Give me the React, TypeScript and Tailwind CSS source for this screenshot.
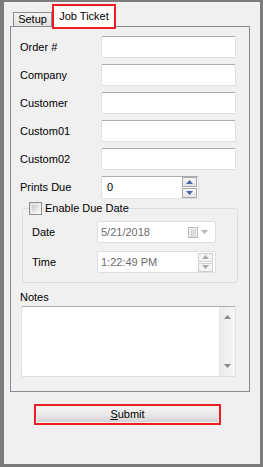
import React from 'react'

// ─── Small pieces ────────────────────────────────────────────────
function Arrow({ dir, color }: { dir: 'up' | 'down'; color: string }) {
  return (
    <svg width="7" height="4" viewBox="0 0 7 4">
      {dir === 'up' ? <path d="M3.5 0 L7 4 L0 4 Z" fill={color} /> : <path d="M0 0 L7 0 L3.5 4 Z" fill={color} />}
    </svg>
  )
}

function TextBox() {
  return <div className="h-[22px] w-[135px] rounded-[2px] border border-[#dcdfe6] border-t-[#abadb3] bg-white" />
}

function Row({ label, children }: { label: string; children: React.ReactNode }) {
  return (
    <div className="flex items-center pl-[9px]">
      <span className="w-[81px]">{label}</span>
      {children}
    </div>
  )
}

function SpinButtons({ color, enabled }: { color: string; enabled: boolean }) {
  const btn = enabled
    ? 'h-[10px] w-[15px] flex items-center justify-center border border-[#a9a9a9] bg-gradient-to-b from-[#f7f7f7] to-[#e4e4e4]'
    : 'h-[9px] w-[15px] flex items-center justify-center border border-[#cfcfcf] bg-[#f4f4f4]'
  return (
    <div className="flex flex-col gap-[1px]">
      <div className={btn}>
        <Arrow dir="up" color={color} />
      </div>
      <div className={btn}>
        <Arrow dir="down" color={color} />
      </div>
    </div>
  )
}

// ─── Main ────────────────────────────────────────────────────────
export default function App() {
  return (
    <div className="h-[467px] w-[263px] border-b-[3px] border-l-4 border-r-[3px] border-t-2 border-[#7b7b7b] bg-[#f0f0f0] font-['Liberation_Sans',Arial,sans-serif] text-[11px] leading-none text-black">
      {/* ─── Tabs ───────────────────────────────────────── */}
      <div className="relative z-10 flex h-[24px] items-end pl-[9px]">
        <div className="flex h-[14px] w-[39px] items-center justify-center border border-b-0 border-[#898c95] bg-gradient-to-b from-[#f4f4f4] to-[#e0e0e0]">
          Setup
        </div>
        <div className="-mb-[3px] flex h-[25px] w-[64px] items-center justify-center border-2 border-[#ed1c24] bg-white">
          Job Ticket
        </div>
      </div>

      {/* ─── Panel ──────────────────────────────────────── */}
      <div className="ml-[6px] h-[366px] w-[240px] border border-[#898c95] bg-[#f0f0f0] pt-[9px]">
        <div className="flex flex-col gap-[6px]">
          <Row label="Order #">
            <TextBox />
          </Row>
          <Row label="Company">
            <TextBox />
          </Row>
          <Row label="Customer">
            <TextBox />
          </Row>
          <Row label="Custom01">
            <TextBox />
          </Row>
          <Row label="Custom02">
            <TextBox />
          </Row>
          <Row label="Prints Due">
            <div className="flex h-[23px] w-[98px] items-center justify-between rounded-[2px] border border-[#dcdfe6] border-t-[#abadb3] bg-white pl-[5px] pr-[1px]">
              <span>0</span>
              <SpinButtons color="#4b66a8" enabled />
            </div>
          </Row>
        </div>

        {/* ─── Due date group ─────────────────────────── */}
        <fieldset className="ml-[11px] mt-[3px] w-[216px] rounded-[3px] border border-[#d5dfe5] px-[6px] pb-[9px]">
          <legend className="flex items-center gap-[3px]">
            <span className="h-[13px] w-[13px] border border-[#8e8f8f] bg-gradient-to-br from-[#dedede] to-[#fbfbfb] p-[2px]">
              <span className="block h-full w-full bg-gradient-to-br from-[#cbcbcb] to-[#f4f4f4]" />
            </span>
            <span>Enable Due Date</span>
          </legend>
          <div className="mt-[6px] flex flex-col gap-[8px]">
            <div className="flex items-center pl-[3px]">
              <span className="w-[65px]">Date</span>
              <div className="flex h-[22px] w-[119px] items-center justify-between rounded-[2px] border border-[#dcdfe6] bg-white pl-[3px] pr-[7px] text-[#6d6d6d]">
                <span>5/21/2018</span>
                <span className="flex items-center gap-[3px]">
                  <svg width="10" height="11" viewBox="0 0 10 11">
                    <rect x="0.5" y="0.5" width="9" height="10" fill="#f3f3f3" stroke="#b8b8b8" />
                    <path d="M2 3h6M2 5h6M2 7h6M2 9h6M3.5 2v8M5.5 2v8M7.5 2v8" stroke="#d0d0d0" strokeWidth="0.8" />
                  </svg>
                  <Arrow dir="down" color="#b5b5b5" />
                </span>
              </div>
            </div>
            <div className="flex items-center pl-[3px]">
              <span className="w-[65px]">Time</span>
              <div className="flex h-[22px] w-[119px] items-center justify-between rounded-[2px] border border-[#dcdfe6] bg-white pl-[3px] pr-[2px] text-[#6d6d6d]">
                <span>1:22:49 PM</span>
                <SpinButtons color="#a8a8a8" enabled={false} />
              </div>
            </div>
          </div>
        </fieldset>

        {/* ─── Notes ──────────────────────────────────── */}
        <div className="mt-[8px] flex h-[13px] items-center pl-[9px]">Notes</div>
        <div className="ml-[10px] mt-[2px] flex h-[71px] w-[215px] justify-end rounded-[2px] border border-[#dcdfe6] border-t-[#abadb3] bg-white">
          <div className="flex w-[16px] flex-col items-center justify-between border-l border-[#e8e8e8] bg-gradient-to-r from-[#ececec] to-[#f6f6f6] py-[8px]">
            <Arrow dir="up" color="#8a8a8a" />
            <Arrow dir="down" color="#8a8a8a" />
          </div>
        </div>
      </div>

      {/* ─── Submit ─────────────────────────────────────── */}
      <div className="ml-[30px] mt-[12px] h-[21px] w-[187px] border-2 border-[#ed1c24] p-[1px]">
        <div className="flex h-full w-full items-center justify-center bg-gradient-to-b from-[#f4f4f4] via-[#e9e9e9] to-[#d3d3d3]">
          <span>
            <span className="underline">S</span>ubmit
          </span>
        </div>
      </div>
    </div>
  )
}
